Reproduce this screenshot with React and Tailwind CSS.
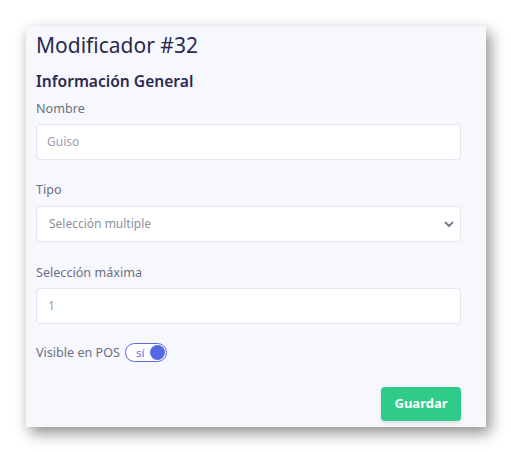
export default function App() {
  return (
    <div className="w-[511px] h-[452px] bg-white" style={{ fontFamily: '"Noto Sans", sans-serif' }}>
      <div className="pt-[26px] pl-[26px]">
        <div className="w-[460px] h-[401px] bg-[#f7f8fd] shadow-[4px_6px_14px_rgba(0,0,0,0.45)] pl-[10px] pr-[25px] pt-[6px]">
          <h1 className="text-[21px] leading-[28px] text-[#2b2950] -mt-[1px]">Modificador #32</h1>
          <h2 className="mt-[11px] text-[15.6px] leading-[22px] font-semibold text-[#2b2950]">Información General</h2>
          <div className="mt-[8px] text-[12.6px] leading-[18px] text-[#6b6f82]">Nombre</div>
          <div className="mt-[6px] h-[36px] bg-white border border-[#e3e6ee] rounded-[4px] flex items-center pl-[10px] text-[12px] text-[#9aa0b0]">Guiso</div>
          <div className="mt-[21px] text-[12.6px] leading-[18px] text-[#6b6f82]">Tipo</div>
          <div className="mt-[7px] h-[36px] bg-white border border-[#e3e6ee] rounded-[4px] flex items-center justify-between pl-[12px] pr-[5px] text-[12px] text-[#8a90a2]">
            <span>Selección multiple</span>
            <svg width="12" height="12" viewBox="0 0 12 12" fill="none"><path d="M2.5 4.5 L6 8 L9.5 4.5" stroke="#7a8194" strokeWidth="2" strokeLinecap="round" strokeLinejoin="round" /></svg>
          </div>
          <div className="mt-[22px] text-[12.6px] leading-[18px] text-[#6b6f82]">Selección máxima</div>
          <div className="mt-[6px] h-[36px] bg-white border border-[#e3e6ee] rounded-[4px] flex items-center pl-[11px] text-[12px] text-[#9aa0b0]">1</div>
          <div className="mt-[19px] flex items-center gap-[5px]">
            <span className="text-[12.6px] leading-[18px] text-[#6b6f82]">Visible en POS</span>
            <span className="w-[42px] h-[19px] rounded-full border border-[#5a6ae6] bg-white flex items-center justify-between pl-[10px] pr-[1px]">
              <span className="text-[11.5px] leading-none text-[#5a6ae6]">sí</span>
              <span className="w-[15px] h-[15px] rounded-full bg-[#5468e2]"></span>
            </span>
          </div>
          <div className="mt-[25px] flex justify-end">
            <button className="w-[80px] h-[34px] rounded-[4px] bg-[#2ecc88] text-white text-[13px] font-bold shadow-[0_2px_4px_rgba(0,0,0,0.12)]">Guardar</button>
          </div>
        </div>
      </div>
    </div>
  );
}
